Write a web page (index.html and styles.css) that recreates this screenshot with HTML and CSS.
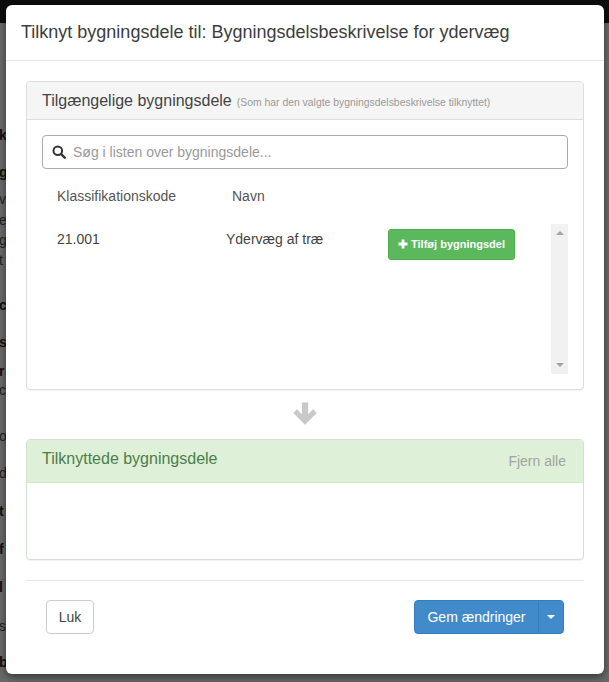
FILE: index.html
```html
<!DOCTYPE html>
<html lang="da">
<head>
<meta charset="utf-8">
<title>Tilknyt bygningsdele</title>
<link rel="stylesheet" href="styles.css">
</head>
<body>
<div class="backdrop">
  <div class="topbar"></div>
  <div class="peek">
    <span class="b">k</span><span class="b u">g</span><span>v</span><span>e</span><span>g</span><span>t</span><span class="b">c</span><span class="b">s</span><span class="b">r</span><span>c</span><span>o</span><span>d</span><span class="b">t</span><span class="b">f</span><span class="b">l</span><span>s</span><span class="b">b</span>
  </div>
</div>
<main class="modal">
  <header class="modal-header">
    <h4 class="modal-title">Tilknyt bygningsdele til: Bygningsdelsbeskrivelse for ydervæg</h4>
  </header>
  <section class="modal-body">
    <div class="panel">
      <div class="panel-heading">
        <h5 class="panel-title">Tilgængelige bygningsdele</h5>
        <small class="panel-note">(Som har den valgte bygningsdelsbeskrivelse tilknyttet)</small>
      </div>
      <div class="panel-body">
        <label class="search">
          <svg class="search-icon" viewBox="0 0 14 14" width="14" height="14" aria-hidden="true"><circle cx="5.8" cy="5.8" r="4.3" fill="none" stroke="#333" stroke-width="2"/><path d="M9 9l3.7 3.7" stroke="#333" stroke-width="2.4" stroke-linecap="round"/></svg>
          <input class="search-input" type="text" placeholder="Søg i listen over bygningsdele...">
        </label>
        <div class="columns">
          <span class="col-code">Klassifikationskode</span>
          <span>Navn</span>
        </div>
        <div class="list">
          <div class="list-rows">
            <div class="row">
              <span class="row-code">21.001</span>
              <span class="row-name">Ydervæg af træ</span>
              <button class="btn-add" type="button">
                <svg viewBox="0 0 10 10" width="10" height="10" aria-hidden="true"><path d="M3.6 0.5h2.8v3.1h3.1v2.8H6.4v3.1H3.6V6.4H0.5V3.6h3.1z" fill="#fff"/></svg>
                Tilføj bygningsdel
              </button>
            </div>
          </div>
          <div class="scrollbar">
            <span class="arrow-up"></span>
            <span class="arrow-down"></span>
          </div>
        </div>
      </div>
    </div>
    <div class="flow-arrow">
      <svg viewBox="0 0 24 24" width="24" height="24" aria-hidden="true"><path d="M9 0.5h6.2v11.7l4.9-4.9 3.6 3.6L12 22.7 0.3 10.9l3.6-3.6 5.1 4.9z" fill="#c9c9c9"/></svg>
    </div>
    <div class="panel panel-success">
      <div class="panel-heading success-heading">
        <h5 class="panel-title">Tilknyttede bygningsdele</h5>
        <a class="remove-all">Fjern alle</a>
      </div>
      <div class="panel-empty"></div>
    </div>
    <footer class="modal-footer">
      <button class="btn-close" type="button">Luk</button>
      <div class="btn-group">
        <button class="btn-save" type="button">Gem ændringer</button>
        <button class="btn-caret" type="button" aria-label="Flere"><span class="caret"></span></button>
      </div>
    </footer>
  </section>
</main>
</body>
</html>
```
FILE: styles.css
```css
* { box-sizing: border-box; }
html, body { margin: 0; height: 100%; }
body {
  position: relative;
  height: 682px;
  overflow: hidden;
  background: #6a6a6a;
  font-family: "Liberation Sans", Arial, sans-serif;
  font-size: 14px;
  color: #333;
  padding: 5px 5px 0 6px;
}
.backdrop {
  position: absolute;
  inset: 0;
  overflow: hidden;
}
.topbar { height: 23px; background: #0d0d0d; }
.peek {
  position: absolute;
  top: 127px;
  left: -1px;
  width: 7px;
  overflow: hidden;
  display: grid;
  grid-template-rows: 37px 27px 21px 20px 20px 45px 37px 29px 19px 46px 37px 38px 38px 38px 39px 36px 16px;
  font-size: 14px;
  line-height: 16px;
  color: #222;
}
.peek .b { font-weight: 700; color: #111; }
.peek .u { text-decoration: underline; }
.modal {
  position: relative;
  height: 669px;
  background: #fff;
  border-radius: 6px;
  box-shadow: 0 3px 9px rgba(0,0,0,.5);
}
.modal-header {
  height: 56px;
  padding: 15px;
  border-bottom: 1px solid #e5e5e5;
}
.modal-title {
  margin: 0;
  font-size: 18px;
  font-weight: 400;
  line-height: 24px;
  color: #3d3d3d;
}
.modal-body { padding: 20px 20px 0; }
.panel {
  height: 309px;
  background: #fff;
  border: 1px solid #ddd;
  border-radius: 4px;
  box-shadow: 0 1px 1px rgba(0,0,0,.05);
}
.panel-heading {
  height: 38px;
  padding: 0 15px;
  display: flex;
  align-items: center;
  gap: 5px;
  background: #f5f5f5;
  border-bottom: 1px solid #ddd;
  border-radius: 3px 3px 0 0;
}
.panel-title {
  margin: 0;
  font-size: 16px;
  font-weight: 400;
  line-height: 18px;
  color: #444;
}
.panel-note {
  font-size: 10.4px;
  color: #999;
  padding-top: 3px;
}
.panel-body { padding: 15px 15px 0; }
.search {
  display: flex;
  align-items: center;
  height: 34px;
  padding-left: 9px;
  border: 1px solid #aaa;
  border-radius: 4px;
  background: #fff;
}
.search-icon { flex: none; }
.search-input {
  flex: 1;
  min-width: 0;
  margin-left: 7px;
  border: 0;
  outline: 0;
  padding: 0;
  background: transparent;
  font: 14px "Liberation Sans", Arial, sans-serif;
  color: #555;
}
.search-input::placeholder { color: #999; opacity: 1; }
.columns {
  display: flex;
  padding: 19px 0 0 15px;
  height: 55px;
  line-height: 16px;
  color: #555;
}
.col-code { width: 175px; }
.list { display: flex; height: 150px; }
.list-rows { flex: 1; min-width: 0; }
.row {
  display: flex;
  align-items: flex-start;
  padding: 5px 0 0 15px;
  color: #444;
}
.row-code { width: 169px; padding-top: 2px; line-height: 16px; }
.row-name { width: 162px; padding-top: 2px; line-height: 16px; }
.btn-add {
  display: flex;
  align-items: center;
  justify-content: center;
  gap: 3px;
  width: 127px;
  height: 31px;
  padding: 0 0 2px;
  border: 1px solid #4cae4c;
  border-radius: 3px;
  background: #5cb85c;
  color: #fff;
  font: 700 11px "Liberation Sans", Arial, sans-serif;
}
.scrollbar {
  flex: none;
  width: 17px;
  background: #f1f1f1;
  display: flex;
  flex-direction: column;
  justify-content: space-between;
  align-items: center;
  padding: 7px 0;
}
.arrow-up, .arrow-down {
  width: 0;
  height: 0;
  border-left: 4px solid transparent;
  border-right: 4px solid transparent;
}
.arrow-up { border-bottom: 4px solid #a3a3a3; }
.arrow-down { border-top: 4px solid #a3a3a3; }
.flow-arrow {
  display: flex;
  justify-content: center;
  height: 49px;
  padding-top: 12px;
}
.panel-success {
  height: 121px;
  border-color: #d6e0cf;
}
.success-heading {
  height: 43px;
  justify-content: space-between;
  background: #dff0d8;
  border-bottom-color: #d6e9c6;
  padding-bottom: 5px;
}
.success-heading .panel-title { color: #4a7f4b; }
.remove-all {
  color: #a3a3a3;
  font-size: 14px;
  padding: 5px 2px 0 0;
}
.modal-footer {
  display: flex;
  justify-content: space-between;
  align-items: flex-start;
  margin-top: 20px;
  padding: 19px 20px 0;
  border-top: 1px solid #e5e5e5;
}
.btn-close {
  width: 48px;
  height: 34px;
  padding: 0;
  border: 1px solid #ccc;
  border-radius: 4px;
  background: #fff;
  color: #444;
  font: 14px "Liberation Sans", Arial, sans-serif;
}
.btn-group { display: flex; }
.btn-save, .btn-caret {
  height: 34px;
  border: 1px solid #357ebd;
  background: #428bca;
  color: #fff;
  font: 14px "Liberation Sans", Arial, sans-serif;
  padding: 0;
}
.btn-save { width: 125px; border-radius: 4px 0 0 4px; }
.btn-caret {
  width: 26px;
  margin-left: -1px;
  border-radius: 0 4px 4px 0;
  display: flex;
  align-items: center;
  justify-content: center;
}
.caret {
  width: 0;
  height: 0;
  border-left: 4px solid transparent;
  border-right: 4px solid transparent;
  border-top: 4px solid #fff;
}
```
